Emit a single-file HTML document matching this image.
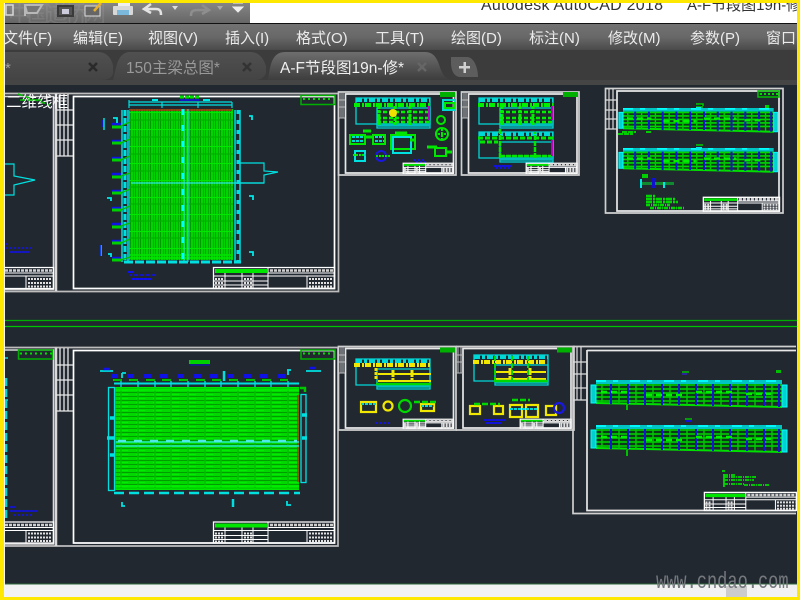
<!DOCTYPE html>
<html lang="zh"><head><meta charset="utf-8"><title>AutoCAD 2018</title>
<style>
html,body{margin:0;padding:0;background:#212830;width:800px;height:600px;overflow:hidden}
svg{display:block;position:absolute;left:0;top:0;filter:blur(.35px)}
text{font-family:"Liberation Sans","Noto Sans CJK SC",sans-serif}
#tblk *,#beam *,#bays *{vector-effect:non-scaling-stroke}
</style></head><body>
<svg width="800" height="600" viewBox="0 0 800 600" xmlns="http://www.w3.org/2000/svg">
<defs>
<linearGradient id="tb" x1="0" y1="0" x2="0" y2="1"><stop offset="0" stop-color="#8a8a8a"/><stop offset="1" stop-color="#666"/></linearGradient>
<linearGradient id="mn" x1="0" y1="0" x2="0" y2="1"><stop offset="0" stop-color="#727272"/><stop offset=".5" stop-color="#686868"/><stop offset="1" stop-color="#4a4a4a"/></linearGradient>
<linearGradient id="t1" x1="0" y1="0" x2="0" y2="1"><stop offset="0" stop-color="#505050"/><stop offset="1" stop-color="#444"/></linearGradient>
<linearGradient id="t3" x1="0" y1="0" x2="0" y2="1"><stop offset="0" stop-color="#6e6e6e"/><stop offset="1" stop-color="#3d3d3d"/></linearGradient>
<pattern id="hv" width="5" height="17" patternUnits="userSpaceOnUse"><rect width="5" height="17" fill="#00d400"/><rect x="0" width="1" height="17" fill="#009c00"/><rect x="3" width="1" height="17" fill="#00ac00"/><rect y="10" width="5" height="1" fill="#00e800"/></pattern>
<pattern id="hh" width="17" height="4" patternUnits="userSpaceOnUse"><rect width="17" height="4" fill="#00d800"/><rect y="0" width="17" height="1" fill="#009c00"/><rect y="2" width="9" height="1" fill="#00ec00"/></pattern>
<g id="tblk" fill="none" stroke="#fff">
<rect x=".5" y=".5" width="121" height="21" stroke-width="1.300"/>
<rect x="2" y="2" width="52" height="4" fill="#00e600" stroke="none"/>
<path d="M55 0V21M55 6H121M55 9H121M94 9V21M0 9H55M0 14H55M0 18H55M12 6V21M29 6V21M40 6V21"/>
<path d="M57 3.500H120" stroke-width="2.500" stroke="#cfcfcf" stroke-dasharray="3 1"/>
<path d="M96 12H120M96 16H120M96 19.500H120M2 12H10M31 12H39M2 16H10M31 16H39M2 20H10M31 20H39" stroke-width="2" stroke="#e0e0e0" stroke-dasharray="2 1"/>
</g>
<g id="beam">
<rect x="0" y="4" width="186" height="19" fill="#0a3a18"/>
<path d="M0 5H186M0 9H186M0 13H186M0 17H186M0 21H186" stroke="#00d800" stroke-width="1.600"/>
<path d="M0 23L186 27" stroke="#00e000" stroke-width="2"/>
<path d="M6 4V23M23 4V24M40 4V24M57 4V24M74 4V25M91 4V25M108 4V25M125 4V26M142 4V26M159 4V26M176 4V26" stroke="#00c800" stroke-width="1.400"/>
<path d="M15 4V24M32 4V24M49 4V25M66 4V25M83 4V25M100 4V25M117 4V26M134 4V26M151 4V26M168 4V26M183 4V27" stroke="#1414d8" stroke-width="2"/>
<rect x="0" y="0" width="186" height="4" fill="#00c4c4"/>
<path d="M0 1H186" stroke="#00ffff" stroke-width="1.800" stroke-dasharray="10 7 5 12"/>
<path d="M186 5H191V27H186ZM0 5H-5V23H0Z" fill="#00d0d0" stroke="#00ffff"/>
<path d="M5 12H35M50 15H90M100 12H140M150 14H175" stroke="#00f000" stroke-width="2.400" stroke-dasharray="6 4"/>
</g>
<g id="bays" fill="none">
<rect x="0" y="0" width="74" height="26" stroke="#00d8d8" stroke-width="1.300"/>
<rect x="21" y="10" width="53" height="20" stroke="#00d8d8" stroke-width="1.300"/>
<path d="M0 2H74" stroke="#00d8d8" stroke-width="4" stroke-dasharray="6 2 3 2"/>
<path d="M21 27H74" stroke="#00bcbc" stroke-width="3.500"/>
</g>
</defs>

<rect width="800" height="600" fill="#212830"/>

<!-- title + toolbar -->
<rect x="250" y="0" width="550" height="23" fill="#fff"/>
<rect x="0" y="0" width="250" height="23" fill="url(#tb)"/>
<text x="481" y="10" font-size="16" fill="#333" textLength="182">Autodesk AutoCAD 2018</text>
<text x="687" y="10" font-size="15" fill="#333">A-F节段图19n-修</text>
<text x="8" y="22" font-size="23" fill="#a8a8a8" opacity=".22" textLength="98">中国道桥网</text>
<g fill="none" stroke-width="2">
<path d="M6 5H13V15H6Z" stroke="#d8d8d8" stroke-width="1.500"/>
<path d="M25 5H42L37 13H27ZM25 5V16" stroke="#b8b8b8" fill="#777"/>
<path d="M58 6H73V16H58Z" fill="#555" stroke="#3a3a3a"/><path d="M62 9H69V14H62Z" fill="#ccd" stroke="none"/>
<path d="M85 6H100V16H85Z" fill="#666" stroke="#ddd" stroke-width="1"/><path d="M94 11L101 3" stroke="#e8b030" stroke-width="2.500"/>
<path d="M118 3H130V8H118Z" fill="#eee" stroke="none"/><rect x="113" y="6" width="20" height="9" rx="1" fill="#d8d8d8" stroke="none"/><rect x="117" y="10" width="12" height="5" fill="#7ab8dc" stroke="none"/>
<path d="M151 4L144 9L151 13M145 9H156C160 9 161 11 161 15" stroke="#e4e4e4" stroke-width="2.500"/>
<path d="M172 6H178L175 10Z" fill="#ddd" stroke="none"/>
<path d="M202 5L209 10L202 14M208 10H197C192 10 191 12 191 16" stroke="#8e8e8e" stroke-width="2.500"/>
<path d="M217 6H223L220 10Z" fill="#aaa" stroke="none"/>
<path d="M233 3H243M233 7H243L238 12Z" fill="#eee" stroke="#eee" stroke-width="1"/>
</g>
<rect x="0" y="23" width="800" height="1" fill="#111"/>

<!-- menu -->
<rect x="0" y="24" width="800" height="26" fill="url(#mn)"/>
<g font-size="15" fill="#ebebeb">
<text x="3" y="43">文件(F)</text>
<text x="73" y="43">编辑(E)</text>
<text x="148" y="43">视图(V)</text>
<text x="225" y="43">插入(I)</text>
<text x="296" y="43">格式(O)</text>
<text x="375" y="43">工具(T)</text>
<text x="451" y="43">绘图(D)</text>
<text x="529" y="43">标注(N)</text>
<text x="608" y="43">修改(M)</text>
<text x="690" y="43">参数(P)</text>
<text x="766" y="43">窗口</text>
</g>

<!-- tabs -->
<rect x="0" y="50" width="800" height="35" fill="#3c3c3c"/>
<rect x="0" y="80" width="800" height="5" fill="#454545"/>
<path d="M0 52H98C108 52 112 60 113 66V73C112 78 108 80 100 80H0Z" fill="url(#t1)"/>
<path d="M113 80C116 72 116 52 130 52H250C260 52 264 60 266 66V73C264 78 260 80 255 80Z" fill="url(#t1)"/>
<path d="M268 80C270 70 270 52 285 52H425C436 52 438 62 441 70C443 76 448 80 452 80Z" fill="url(#t3)"/>
<path d="M451 57H467C474 57 478 68 478 77H460C454 77 451 70 451 63Z" fill="#5d5d5d"/>
<rect x="459" y="66" width="11" height="2.500" fill="#d0d0d0"/><rect x="463.500" y="62" width="2.500" height="11" fill="#d0d0d0"/>
<text x="5" y="73" font-size="15" fill="#a0a0a0">*</text>
<text x="126" y="73" font-size="15.500" fill="#999">150主梁总图*</text>
<text x="280" y="73" font-size="15.500" fill="#f0f0f0">A-F节段图19n-修*</text>
<g stroke-width="2.500" fill="none">
<path d="M89 63L97 71M97 63L89 71" stroke="#2a2a2a"/><path d="M243 63L251 71M251 63L243 71" stroke="#333"/><path d="M418 63L426 71M426 63L418 71" stroke="#666"/>
</g>

<!-- TOP ROW big sheet -->
<g fill="none" stroke="#d8d8d8">
<path d="M0 93.500H338.500V291.500H0" stroke-width="1.700" stroke="#bdbdbd"/>
<path d="M73.500 96.500H334.500V288.500H73.500Z" stroke-width="1.700" stroke="#fff"/>
<path d="M0 289.500H53.500V96.500H0" stroke-width="1.600"/>
<path d="M56 93.500V291" stroke-width="2.500"/>
<path d="M56 110H73M56 125H73M56 140H73M56 156H73M60 94V156M64 94V156M68 94V156" stroke="#e8e8e8" stroke-width="1.300"/>
</g>
<text x="6" y="107" font-size="15.500" fill="#fff" textLength="62">二维线框</text>
<path d="M18 94L50 105M20 100H44" stroke="#00c000" stroke-width="1.500" stroke-dasharray="5 3"/>
<rect x="301" y="95.500" width="34" height="9" fill="none" stroke="#00b000" stroke-width="1.500"/>
<path d="M303 99H333" stroke="#00e000" stroke-width="2" stroke-dasharray="2 3"/>

<rect x="129" y="109" width="104" height="151" fill="url(#hv)"/>
<path d="M129 120H233M129 137H233M129 154H233M129 171H233M129 187H233M129 204H233M129 221H233M129 238H233M129 255H233" stroke="#00b000" stroke-width="1.300"/>
<path d="M129 110H232" stroke="#c01818" stroke-width="1.500"/>
<path d="M129 255H233M129 258H233" stroke="#00e800" stroke-width="1.500"/>
<g fill="none" stroke="#00e0e0">
<path d="M129 102H232M129 105H232M129 100V108M162 102V108M198 102V108M232 102V108" stroke-width="1.200"/>
<path d="M184 109V262M188 109V262" stroke="#2ee6e6"/>
<path d="M131 183H264" stroke="#2ee6e6" stroke-width="1.200"/>
<path d="M240 163H264V171L278 172L264 175V183H240" stroke-width="1.200"/>
<path d="M0 164H14V176L35 180L14 185V195H0" stroke-width="1.200"/>
<path d="M122 110V262M128 110V262" stroke-width="1.500"/>
<path d="M125 110V262" stroke-width="3" stroke-dasharray="6 2"/>
<path d="M235 110V262M240 110V262" stroke-width="1.500"/>
<path d="M238 110V262" stroke-width="3" stroke-dasharray="4 6"/>
<path d="M124 262H241" stroke-width="3" stroke-dasharray="9 2"/>
<path d="M104 118V130M101 245V256" stroke-width="1.500"/>
</g>
<path d="M183 109V262" stroke="#00ffff" stroke-width="3" stroke-dasharray="6 10"/>
<path d="M180 97H200" stroke="#00e000" stroke-width="3" stroke-dasharray="4 1"/>
<path d="M179 100H199" stroke="#1010f0" stroke-width="1.500"/>
<path d="M152 100H158M203 100H210" stroke="#00e8e8" stroke-width="2"/>
<g>
<path d="M112 124H121M112 141H121M112 158H121M112 174H121M112 191H121M112 208H121M112 224H121M112 241H121M112 258H121" stroke="#1010e8" stroke-width="2.500"/>
<path d="M112 127H121M112 143H121M112 160H121M112 177H121M112 193H121M112 210H121M112 227H121M112 243H121M112 260H121" stroke="#00d000" stroke-width="3"/>
<path d="M121 126L130 122M121 143L130 139M121 160L130 156M121 176L130 173M121 193L130 189M121 210L130 206M121 226L130 223M121 243L130 239M121 260L130 257" stroke="#00c000" stroke-width="1.300"/>
<path d="M102 120V127M100 245V256" stroke="#1010e8" stroke-width="1.500"/>
</g>
<path d="M113 118H117V123M107 198H111V201M108 254H111V257M249 116H252V120M249 196H253V200M249 252H253V256" fill="none" stroke="#00e8e8" stroke-width="1.800"/>
<path d="M128 272H134" stroke="#1010f0" stroke-width="2"/><path d="M130 275H158" stroke="#1010f0" stroke-width="1.500" stroke-dasharray="2 1"/><path d="M132 279H152" stroke="#1010f0" stroke-width="2" stroke-dasharray="3 1"/>
<path d="M5 244H8M5 248H34M10 252H30" stroke="#1010f0" stroke-width="1.500" stroke-dasharray="3 1"/>
<use href="#tblk" x="213" y="267"/>
<use href="#tblk" x="-68" y="267"/>

<!-- TOP ROW small sheets -->
<g fill="none" stroke="#d0d0d0">
<path d="M338.500 92H456V175H338.500Z" stroke-width="1.700"/>
<path d="M345.500 94H453.500V173H345.500Z" stroke-width="1.700" stroke="#e8e8e8"/>
<path d="M341 92V118M343 92V118M339 100H345M339 107H345M339 118H345" stroke="#bbb"/>
<path d="M461.500 92H579V175H461.500Z" stroke-width="1.700"/>
<path d="M468.500 94H577V173H468.500Z" stroke-width="1.700" stroke="#e8e8e8"/>
<path d="M462 118H468M464 92V118M466 92V118M462 100H468M462 107H468" stroke="#bbb"/>
<path d="M605.500 88.500H783V213H605.500Z" stroke-width="1.700"/>
<path d="M617 91H779V211H617Z" stroke-width="1.700" stroke="#e8e8e8"/>
<path d="M605 100H617M605 110H617M605 119H617M605 129H617M609 89V129M613 89V129" stroke="#ddd" stroke-width="1.200"/>
</g>
<rect x="440" y="92" width="15" height="5" fill="#00b000"/><rect x="563" y="92" width="15" height="5" fill="#00b000"/>
<rect x="758" y="91" width="21" height="6" fill="none" stroke="#00c000" stroke-width="1.500"/><path d="M760 94H778" stroke="#00e000" stroke-width="2" stroke-dasharray="2 2"/>
<use href="#bays" x="356" y="98"/><use href="#bays" x="479" y="98"/>
<g fill="none" stroke="#00f000">
<path d="M354 105H431M478 105H553" stroke-width="4" stroke-dasharray="6 2 2 1"/>
<path d="M377 112H431M500 112H553M377 118H431M500 118H553M377 122H431M500 122H553" stroke-width="2.500" stroke-dasharray="4 2"/>
<path d="M379 106V126M395 106V126M410 106V126M502 106V126M520 106V126M533 106V126" stroke-width="3" stroke-dasharray="3 1"/>
</g>
<circle cx="393" cy="113" r="4" fill="#f0e000"/>
<path d="M429 106V120M552 106V120" stroke="#c000c0" stroke-width="2"/>
<g fill="none" stroke="#00e800" stroke-width="2">
<rect x="443" y="100" width="12" height="10" stroke="#00d8d0"/><rect x="445" y="103" width="9" height="5"/>
<circle cx="441" cy="120" r="4"/><circle cx="442" cy="134" r="6"/><path d="M438 134H447M442 129V139" stroke-dasharray="2 1"/>
<rect x="350" y="135" width="15" height="9"/><rect x="373" y="135" width="12" height="9"/><path d="M365 137H373M363 131H371" stroke-width="3"/>
<path d="M352 137H363M375 137H384M352 141H363M375 141H384" stroke="#00d8d8" stroke-dasharray="3 1"/>
<rect x="391" y="135" width="24" height="14"/><rect x="393" y="137" width="18" height="16" stroke="#00e0e0"/><path d="M395 133H407M410 140H415" stroke-width="3"/>
<rect x="355" y="151" width="10" height="10" stroke="#00e0e0"/><path d="M353 155H366" stroke-dasharray="2 1"/>
<circle cx="381" cy="156" r="5" stroke="#1818e0"/><path d="M376 156H390" stroke-dasharray="2 1"/>
<rect x="435" y="148" width="11" height="8"/><path d="M427 147H437M446 152H452" stroke-width="3"/>
</g>
<path d="M413 160H425M415 162H428" stroke="#1010f0" stroke-width="1.800" stroke-dasharray="3 1"/>
<path d="M494 166H512M495 168H512" stroke="#1010f0" stroke-width="1.800" stroke-dasharray="3 1"/>
<use href="#bays" x="479" y="132"/>
<path d="M478 138H553M480 142H498" stroke="#00e800" stroke-width="3" stroke-dasharray="5 2"/>
<path d="M500 156H552M500 158V128M535 158V132" stroke="#00e800" stroke-width="2.500" stroke-dasharray="5 1"/>
<path d="M552 140V156" stroke="#c000c0" stroke-width="2"/>
<g transform="translate(403 163) scale(.413 .48)"><use href="#tblk"/></g>
<g transform="translate(526 163) scale(.42 .48)"><use href="#tblk"/></g>
<g transform="translate(703 197) scale(.63 .66)"><use href="#tblk"/></g>
<g transform="translate(623 108) scale(.81 .88)"><use href="#beam"/></g>
<g transform="translate(623 148) scale(.81 .88)"><use href="#beam"/></g>
<path d="M696 104H703V106M696 107H703" stroke="#00d000" stroke-width="1.500"/><rect x="696" y="107" width="5" height="2" fill="#00e8e8"/>
<path d="M696 145H703" stroke="#00d000" stroke-width="1.500"/><path d="M696 148H702" stroke="#1010e0" stroke-width="1.500"/><rect x="696" y="147" width="6" height="2" fill="#00e8e8"/>
<rect x="765" y="105" width="4" height="3" fill="#00d000"/>
<path d="M618 134H633M622 132H636M646 132H652" stroke="#00d000" stroke-width="2" stroke-dasharray="5 1"/>
<path d="M642 175H648M642 177H648" stroke="#00d000" stroke-width="2"/>
<rect x="641" y="182" width="33" height="3" fill="#0f8a30"/><path d="M641 179V188M664 182V188" stroke="#00e8e8" stroke-width="2"/><rect x="652" y="178" width="3" height="10" fill="#1010d0"/>
<g stroke="#00d800" stroke-width="2.500" fill="none"><path d="M646 196H655M646 199H675M646 202H678" stroke-dasharray="6 1 2 1"/><path d="M646 205H670M650 208H684" stroke-dasharray="4 1 1 1"/></g>

<!-- divider -->
<path d="M0 320.500H800" stroke="#00b000" stroke-width="1.200"/><path d="M0 326.500H800" stroke="#00c400" stroke-width="1.200"/>

<!-- BOTTOM ROW -->
<g fill="none" stroke="#d8d8d8">
<path d="M0 347.500H338V546H0" stroke-width="1.700" stroke="#bdbdbd"/>
<path d="M73.500 350.500H334.500V543H73.500Z" stroke-width="1.700" stroke="#fff"/>
<path d="M0 350H53.500V544H0" stroke-width="1.600"/>
<path d="M56 347.500V546" stroke-width="2.500"/>
<path d="M56 365H73M56 380H73M56 395H73M56 411H73M60 348V411M64 348V411M68 348V411" stroke="#e8e8e8" stroke-width="1.300"/>
</g>
<rect x="301" y="350" width="34" height="9" fill="none" stroke="#00b000" stroke-width="1.500"/><path d="M303 353.500H333" stroke="#00e000" stroke-width="2" stroke-dasharray="2 3"/>
<rect x="18.500" y="350" width="34" height="9" fill="none" stroke="#00b000" stroke-width="1.500"/><path d="M20 353.500H52" stroke="#00e000" stroke-width="2" stroke-dasharray="2 3"/>
<rect x="115" y="387" width="184" height="103" fill="url(#hh)"/>
<path d="M121 387V490M138 387V490M155 387V490M171 387V490M188 387V490M205 387V490M221 387V490M238 387V490M255 387V490M271 387V490M288 387V490" stroke="#00c000" stroke-width="1.500"/>
<path d="M115 390H299M115 388H299M115 486H299M115 489H299" stroke="#00f000" stroke-width="1.300"/>
<path d="M115 387V490M298 395V482" stroke="#d81818" stroke-width="1.300"/>
<path d="M116 442H299M116 446H299" stroke="#2ee6e6" stroke-width="1.200"/>
<path d="M118 441H297" stroke="#4de8e8" stroke-width="2.500" stroke-dasharray="8 8"/>
<g fill="none" stroke="#00e0e0">
<rect x="108.500" y="387.500" width="6" height="103" stroke-width="1.300"/>
<rect x="301" y="394.500" width="5" height="88" stroke-width="1.300"/>
<path d="M114 383.500H299" stroke-width="2"/>
<path d="M114 493H300" stroke-width="2.500" stroke-dasharray="10 5"/>
<path d="M121 381V387M138 381V387M155 381V387M171 381V387M188 381V387M205 381V387M221 381V387M238 381V387M255 381V387M271 381V387M288 381V387" stroke-width="1.300"/>
<path d="M107 438H114M110 418H114M110 455H114M302 415H307M302 438H307" stroke-width="3.500"/>
<path d="M224 371V381M233 499V507" stroke-width="2.500"/>
<path d="M100 371H113M306 371H321" stroke-width="1.800"/>
<path d="M122 373H126M122 378V373M287 370H291M288 370V375M122 502V506H125M287 501V505H291" stroke-width="1.800"/>
</g>
<g stroke="#1010e8" stroke-width="4"><path d="M111 376H118M127 376H134M144 376H151M160 376H167M177 376H184M194 376H201M210 376H217M227 376H234M244 376H251M260 376H267M278 376H285"/></g>
<g stroke="#00c000" stroke-width="2"><path d="M113 380H122M129 380H138M146 380H155M162 380H171M179 380H188M196 380H205M212 380H221M229 380H238M246 380H255M262 380H271M280 380H288"/></g>
<path d="M103 369H110M309 368H316" stroke="#1010e8" stroke-width="2.500"/>
<rect x="189" y="360" width="21" height="4" fill="#00d000"/><path d="M189 365H209" stroke="#1010d0" stroke-width="1"/>
<path d="M300 388H305V392" fill="none" stroke="#00c800" stroke-width="2.500"/>
<path d="M5 358H8M5 400H8" stroke="#00e0e0" stroke-width="1.500"/>
<path d="M6 378V520" stroke="#00d8d8" stroke-width="2.500" stroke-dasharray="8 3"/>
<path d="M10 507H15M10 511H37M13 515H33" stroke="#1010f0" stroke-width="1.500" stroke-dasharray="3 1"/>
<use href="#tblk" x="213" y="521.500"/>
<use href="#tblk" x="-68" y="521.500"/>

<!-- bottom small sheets -->
<g fill="none" stroke="#d0d0d0">
<path d="M338.500 346.500H456V430H338.500Z" stroke-width="1.700"/>
<path d="M345.500 348.500H453.500V428H345.500Z" stroke-width="1.700" stroke="#e8e8e8"/>
<path d="M339 373H345M341 347V373M343 347V373M339 355H345M339 362H345" stroke="#bbb"/>
<path d="M456 346.500H574V430H456" stroke-width="1.700"/>
<path d="M463 348.500H571V428H463Z" stroke-width="1.700" stroke="#e8e8e8"/>
<path d="M456 373H463M458 347V373M461 347V373M456 355H463M456 362H463" stroke="#bbb"/>
<path d="M573 347V513.500H796" stroke-width="1.700"/>
<path d="M573 346.500H796" stroke-width="1.700"/>
<path d="M587 350.500H796M587 350V510.500H796" stroke-width="1.700" stroke="#e8e8e8"/>
<path d="M573 362H587M573 374H587M573 388H587M573 400H587M577 347V400M581 347V400" stroke="#ddd" stroke-width="1.200"/>
</g>
<rect x="440" y="347.500" width="15" height="5" fill="#00b000"/><rect x="557" y="347.500" width="15" height="5" fill="#00b000"/>
<use href="#bays" x="356" y="359"/><use href="#bays" x="474" y="355"/>
<g fill="none" stroke="#f0e800">
<path d="M354 365H431M473 362H546" stroke-width="4" stroke-dasharray="6 2 2 1"/>
<path d="M378 374H431M496 372H546M378 381H431M496 379H546" stroke-width="2"/>
<path d="M393 370V382M412 370V382M510 368V382M530 368V382M376 368V380" stroke-width="3" stroke-dasharray="3 1"/>
<g stroke-width="2.200">
<rect x="361" y="402" width="15" height="10"/><circle cx="388" cy="406" r="4.500"/><circle cx="405" cy="406" r="6" stroke="#00d800"/><rect x="421" y="404" width="13" height="7"/>
<rect x="470" y="406" width="10" height="8"/><rect x="494" y="406" width="9" height="8"/><rect x="510" y="405" width="12" height="12"/><rect x="526" y="405" width="12" height="12"/><rect x="546" y="406" width="10" height="9"/><circle cx="559" cy="408" r="5" stroke="#1818e0"/>
</g>
</g>
<path d="M361 404H376M421 406H434M510 409H538" stroke="#00d8d8" stroke-width="2" stroke-dasharray="3 1"/>
<path d="M376 384H431M495 381H547" stroke="#00d800" stroke-width="2.500"/>
<path d="M495 356V384M512 356V384M528 356V384" stroke="#00d800" stroke-width="2" stroke-dasharray="5 2"/>
<path d="M474 404H500M512 400H530M414 402H436" stroke="#00d800" stroke-width="2.500" stroke-dasharray="6 2"/>
<path d="M375 423H391M484 420H505M486 423H502" stroke="#1010f0" stroke-width="1.800" stroke-dasharray="3 1"/>
<g transform="translate(403 419) scale(.413 .43)"><use href="#tblk"/></g>
<g transform="translate(520 419) scale(.42 .43)"><use href="#tblk"/></g>
<use href="#beam" x="596" y="380"/>
<use href="#beam" x="596" y="425"/>
<g transform="translate(704 492) scale(.76 .86)"><use href="#tblk"/></g>
<rect x="776" y="370" width="5" height="3" fill="#00c000"/>
<path d="M682 372H689" stroke="#00c000" stroke-width="1.500"/><path d="M682 374H687" stroke="#3020c0" stroke-width="1.500"/>
<path d="M685 419H692" stroke="#00c000" stroke-width="1.500"/><path d="M685 421H691" stroke="#1010d0" stroke-width="2"/>
<path d="M627 404V410M627 450V456" stroke="#00c000" stroke-width="2"/>
<g stroke="#00d800" fill="none" stroke-width="1.800"><path d="M722 471H725M724 475H736M724 477H757M724 480H754M724 484H744M744 485H769" stroke-dasharray="4 1 1 1"/><path d="M724 474V487"/></g>

<!-- status strip -->
<rect x="0" y="584" width="800" height="16" fill="#f2f2f2"/>
<rect x="0" y="583.500" width="800" height="1" fill="#2f6a3c"/>
<rect x="726" y="586" width="21" height="11" fill="#cccccc"/>
<text transform="translate(656 588) scale(1 1.350)" style="font-family:'Liberation Mono',monospace" font-size="17" fill="#74787d">www.cndao.com</text>

<!-- yellow frame -->
<rect x="0" y="0" width="800" height="3" fill="#ffe800"/>
<rect x="0" y="597" width="800" height="3" fill="#ffe800"/>
<rect x="4" y="3" width="1" height="594" fill="#f4f4f4"/>
<rect x="0" y="0" width="4" height="600" fill="#ffe800"/>
<rect x="797" y="0" width="3" height="600" fill="#ffe800"/>
</svg>
</body></html>
